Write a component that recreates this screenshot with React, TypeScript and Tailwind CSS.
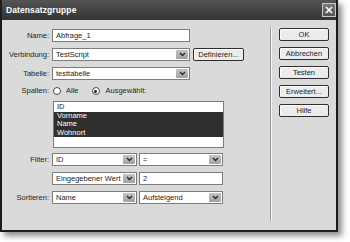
import React from 'react';

const font = "font-['Liberation_Sans',Arial,sans-serif]";

function Arrow() {
  return (
    <div className="m-[1px] flex w-[12px] items-center justify-center rounded-[1px] bg-gradient-to-b from-[#c4c4c4] to-[#a2a2a2]">
      <svg width="7" height="5" viewBox="0 0 7 5">
        <path d="M1 1 L3.5 3.5 L6 1" fill="none" stroke="#2a2a2a" strokeWidth="1.4" />
      </svg>
    </div>
  );
}

function Select({ value, w }: { value: string; w: string }) {
  return (
    <div className={`flex h-[13px] ${w} border border-[#7c7c7c] bg-white`}>
      <div className="flex-1 overflow-hidden whitespace-nowrap pl-[3px] leading-[11px]">{value}</div>
      <Arrow />
    </div>
  );
}

function Input({ value, w }: { value: string; w: string }) {
  return (
    <div className={`h-[13px] ${w} border border-[#7c7c7c] bg-white pl-[3px] leading-[11px]`}>{value}</div>
  );
}

function Btn({ children, className = '' }: { children: React.ReactNode; className?: string }) {
  return (
    <div
      className={`flex h-[13px] w-[50px] items-center justify-center rounded-[2px] border border-[#2e2e2e] bg-[#ececec] shadow-[inset_1px_1px_0_#ffffff] ${className}`}
    >
      {children}
    </div>
  );
}

function Row({ label, children, className = '' }: { label: string; children: React.ReactNode; className?: string }) {
  return (
    <div className={`flex items-center ${className}`}>
      <div className="w-[47px] text-right">{label}</div>
      <div className="ml-[3px] flex items-center gap-[2px]">{children}</div>
    </div>
  );
}

function Radio({ checked }: { checked?: boolean }) {
  return (
    <div className="flex h-[8px] w-[8px] items-center justify-center rounded-full border border-[#4a4a4a] bg-white">
      {checked && <div className="h-[3px] w-[3px] rounded-full bg-[#222]" />}
    </div>
  );
}

export default function App() {
  const items = [
    { t: 'ID', sel: false },
    { t: 'Vorname', sel: true },
    { t: 'Name', sel: true },
    { t: 'Wohnort', sel: true },
  ];

  return (
    <div className={`h-[242px] w-[350px] bg-white ${font} text-[7.5px] text-[#1e1e1e]`}>
      <div className="flex h-[232px] w-[338px] flex-col border-2 border-t-0 border-[#1c1c1c] bg-[#dadada] shadow-[4px_4px_6px_rgba(0,0,0,0.45)]">
        {/* Titelleiste */}
        <div className="flex h-[20px] items-center justify-between bg-gradient-to-b from-[#555] to-[#333] pl-[4px] pr-0">
          <span className="text-[8.5px] font-bold tracking-[0.1px] text-white">Datensatzgruppe</span>
          <div className="flex h-[14px] w-[14px] items-center justify-center border border-[#c8c8c8] bg-gradient-to-b from-[#7a7a7a] to-[#555]">
            <svg width="8" height="8" viewBox="0 0 8 8">
              <path d="M1 1 L7 7 M7 1 L1 7" stroke="#fff" strokeWidth="1.6" />
            </svg>
          </div>
        </div>

        <div className="flex flex-1">
          {/* Formular */}
          <div className="w-[268px] pt-[9px]">
            <Row label="Name:">
              <Input value="Abfrage_1" w="w-[138px]" />
            </Row>
            <Row label="Verbindung:" className="mt-[6px]">
              <Select value="TestScript" w="w-[138px]" />
              <Btn className="ml-[1px] w-[51px]">Definieren...</Btn>
            </Row>
            <Row label="Tabelle:" className="mt-[6px]">
              <Select value="testtabelle" w="w-[138px]" />
            </Row>
            <div className="mt-[5px] flex h-[12px] items-center">
              <div className="w-[47px] text-right">Spalten:</div>
              <div className="ml-[4px] flex items-center">
                <Radio />
                <span className="ml-[5px]">Alle</span>
                <div className="ml-[13px]">
                  <Radio checked />
                </div>
                <span className="ml-[6px]">Ausgewählt:</span>
              </div>
            </div>
            <div className="ml-[51px] mt-[4px] h-[47px] w-[171px] border border-[#7c7c7c] bg-white pt-[1px]">
              {items.map((it) => (
                <div
                  key={it.t}
                  className={`h-[8.5px] pl-[3px] leading-[8.5px] ${it.sel ? 'bg-[#2f2f2f] text-white' : ''}`}
                >
                  {it.t}
                </div>
              ))}
            </div>
            <Row label="Filter:" className="mt-[5px]">
              <Select value="ID" w="w-[85px]" />
              <Select value="=" w="w-[84px]" />
            </Row>
            <Row label="" className="mt-[6px]">
              <Select value="Eingegebener Wert" w="w-[85px]" />
              <Input value="2" w="w-[84px]" />
            </Row>
            <Row label="Sortieren:" className="mt-[6px]">
              <Select value="Name" w="w-[85px]" />
              <Select value="Aufsteigend" w="w-[84px]" />
            </Row>
          </div>

          {/* Schaltflächen */}
          <div className="mb-[9px] mt-[7px] flex flex-col gap-[6px] border-l border-l-[#9a9a9a] pl-[8px] pt-[1px] shadow-[inset_1px_0_0_#f4f4f4]">
            <Btn>OK</Btn>
            <Btn>Abbrechen</Btn>
            <Btn>Testen</Btn>
            <Btn>Erweitert...</Btn>
            <Btn>Hilfe</Btn>
          </div>
        </div>
      </div>
    </div>
  );
}
